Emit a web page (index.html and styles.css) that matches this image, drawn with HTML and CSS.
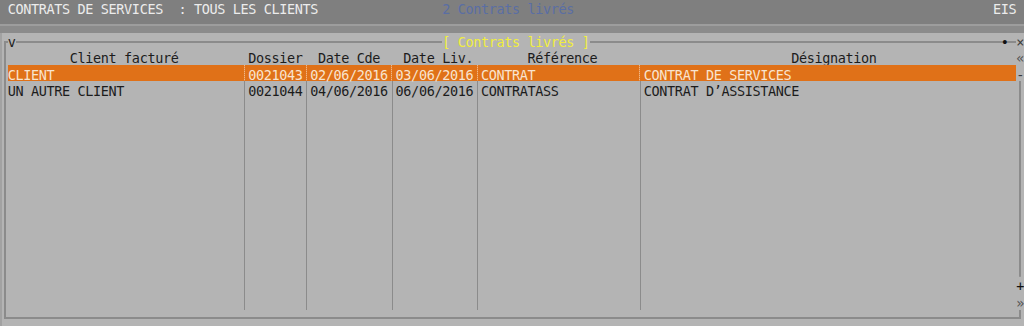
FILE: index.html
```html
<!DOCTYPE html>
<html>
<head>
  <meta charset="UTF-8">
  <title>Contrats de services</title>
  <link rel="stylesheet" href="styles.css">
</head>
<body>
  <div class="screen">
    <!-- Title bar -->
    <div class="topbar">
      <span class="app-title">CONTRATS DE SERVICES  : TOUS LES CLIENTS</span>
      <span class="counter">2 Contrats livrés</span>
      <span class="sys">EIS</span>
    </div>
    <div class="rule"></div>

    <!-- List window -->
    <div class="panel">
      <div class="box">
        <div class="box-title">
          <span class="marker">v</span>
          <span class="legend">[ Contrats livrés ]</span>
          <span class="dot">•</span>
        </div>
        <div class="row head">
          <span>Client facturé</span><span class="sep"></span>
          <span>Dossier</span><span class="sep"></span>
          <span>Date Cde</span><span class="sep"></span>
          <span class="pad">Date Liv.</span><span class="sep"></span>
          <span class="pad">Référence</span><span class="sep"></span>
          <span class="pad">Désignation</span>
        </div>
        <div class="rows">
          <div class="row sel">
            <span>CLIENT</span><span class="sep"></span>
            <span>0021043</span><span class="sep"></span>
            <span>02/06/2016</span><span class="sep"></span>
            <span>03/06/2016</span><span class="sep"></span>
            <span>CONTRAT</span><span class="sep"></span>
            <span>CONTRAT DE SERVICES</span>
          </div>
          <div class="row">
            <span>UN AUTRE CLIENT</span><span class="sep"></span>
            <span>0021044</span><span class="sep"></span>
            <span>04/06/2016</span><span class="sep"></span>
            <span>06/06/2016</span><span class="sep"></span>
            <span>CONTRATASS</span><span class="sep"></span>
            <span>CONTRAT D’ASSISTANCE</span>
          </div>
        </div>
      </div>
      <div class="rail">
        <span class="close">×</span>
        <span class="up">«</span>
        <span class="thumb">-</span>
        <span class="track"></span>
        <span class="plus">+</span>
        <span class="down">»</span>
        <span class="corner"></span>
      </div>
    </div>
  </div>
</body>
</html>
```

FILE: styles.css
```css
:root {
  --c: 7.758px;   /* one character cell (132 columns) */
  --r: 16.3px;    /* one text row (20 rows) */
  --line: #8b8b8b;
  --bg: #b4b4b4;
  --cols: calc(30 * var(--c)) var(--c) calc(7 * var(--c)) var(--c) calc(10 * var(--c)) var(--c) calc(10 * var(--c)) var(--c) calc(20 * var(--c)) var(--c) calc(48 * var(--c));
}

body { margin: 0; background: var(--bg); }

.screen {
  width: 1024px; height: 326px; overflow: hidden;
  display: flex; flex-direction: column;
  background: var(--bg);
  font-family: "DejaVu Sans Mono", monospace; font-size: 13.5px; letter-spacing: -0.37px;
  color: #1c1c1c;
}
.screen span { white-space: pre; }

.topbar {
  display: flex; height: 24px; box-sizing: border-box;
  padding: 4.4px var(--c) 0; line-height: 11.9px;
  background: #7f7f7f; color: #ececec;
}
.app-title { width: calc(56 * var(--c)); }
.counter { flex: 1; color: #5a6ea4; }
.rule { height: 6.6px; border-top: 2px solid #9d9d9d; background: #8b8b8b; flex: none; }

.panel { display: flex; height: 293.4px; border-left: 2px solid #a2a2a2; box-sizing: border-box; }

.box {
  flex: 1; height: 278px; box-sizing: border-box;
  margin: 8.4px 0 0 2px; padding-left: calc(var(--c) - 6px);
  border: 2px solid var(--line); border-right: 0;
  display: flex; flex-direction: column;
}
.box-title {
  display: flex; height: var(--r); box-sizing: border-box;
  margin-top: -10.4px; padding-top: 4.4px; line-height: 11.9px;
}
.marker { width: var(--c); background: var(--bg); }
.legend { margin-left: calc(55 * var(--c)); background: var(--bg); color: #f0ee3e; }
.dot { margin-left: auto; margin-right: var(--c); width: var(--c); color: #111; }

.row {
  display: grid; grid-template-columns: var(--cols);
  height: var(--r); box-sizing: border-box;
  padding-top: 4.4px; line-height: 11.9px;
}
.head span { text-align: center; }
.head .pad { padding-left: var(--c); }

.rows {
  height: calc(15 * var(--r));
  background-image: linear-gradient(var(--line), var(--line)), linear-gradient(var(--line), var(--line)), linear-gradient(var(--line), var(--line)), linear-gradient(var(--line), var(--line)), linear-gradient(var(--line), var(--line));
  background-size: 1px 100%;
  background-repeat: no-repeat;
  background-position: calc(30.5 * var(--c)) 0, calc(38.5 * var(--c)) 0, calc(49.5 * var(--c)) 0, calc(60.5 * var(--c)) 0, calc(81.5 * var(--c)) 0;
}
.sel { background: #e07118; color: #f9e4cf; }
.sel .sep {
  margin-top: -4.4px;
  background: repeating-linear-gradient(#f0b886 0 1px, #e58a44 1px 2px) center / 1px 100% no-repeat;
}

.rail {
  width: var(--c); display: flex; flex-direction: column;
  line-height: 11.9px; text-align: center; color: #3c3c3c;
}
.rail span { height: var(--r); box-sizing: border-box; padding-top: 4.4px; flex: none; }
.rail .plus { color: #111; }
.rail .up, .rail .down { color: #555; }
.rail .track {
  height: calc(12 * var(--r)); padding: 0;
  background: linear-gradient(var(--line), var(--line)) center / 2px 100% no-repeat;
}
.rail .corner {
  padding: 0;
  background:
    linear-gradient(var(--line), var(--line)) center top / 2px calc(50% + 1px) no-repeat,
    linear-gradient(var(--line), var(--line)) left center / 50% 2px no-repeat;
}
```
